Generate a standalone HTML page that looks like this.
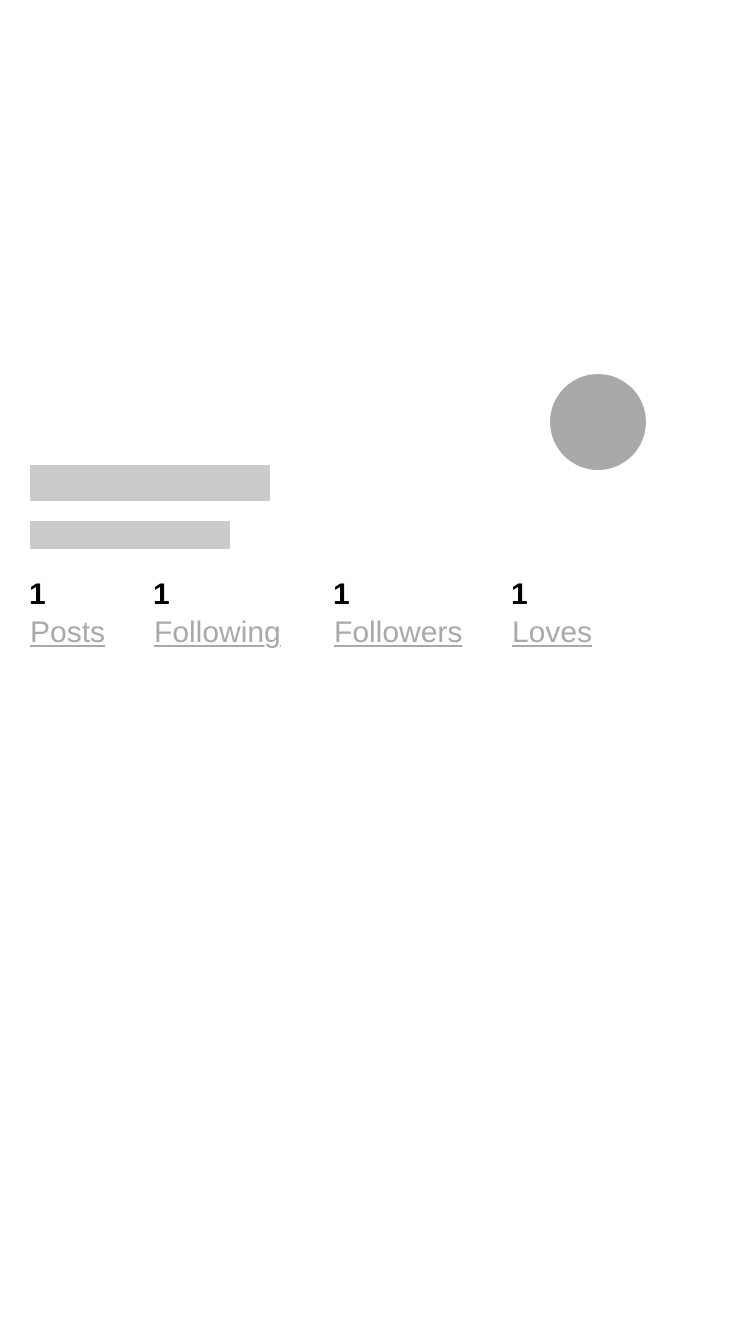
<!DOCTYPE html>
<html><head><meta charset="utf-8"><style>
html,body{margin:0;padding:0;background:#fff;width:750px;height:1334px;overflow:hidden;position:relative;font-family:"Liberation Sans",sans-serif}
.b{position:absolute;background:#cbcbcb}
.c{position:absolute;left:550px;top:374px;width:96px;height:96px;border-radius:50%;background:#a9a9a9}
.n{position:absolute;top:578px;font-size:30px;font-weight:bold;color:#000;line-height:34px}
.l{position:absolute;top:615px;font-size:30px;color:#a9a9a9;line-height:36px;text-decoration:underline;text-underline-offset:3px;text-decoration-thickness:2px}
</style></head><body>
<div class="c"></div>
<div class="b" style="left:30px;top:465px;width:240px;height:36px"></div>
<div class="b" style="left:30px;top:521px;width:200px;height:28px"></div>
<div class="n" style="left:29px">1</div>
<div class="n" style="left:153px">1</div>
<div class="n" style="left:333px">1</div>
<div class="n" style="left:511px">1</div>
<div class="l" style="left:30px">Posts</div>
<div class="l" style="left:154px">Following</div>
<div class="l" style="left:334px">Followers</div>
<div class="l" style="left:512px">Loves</div>
</body></html>
